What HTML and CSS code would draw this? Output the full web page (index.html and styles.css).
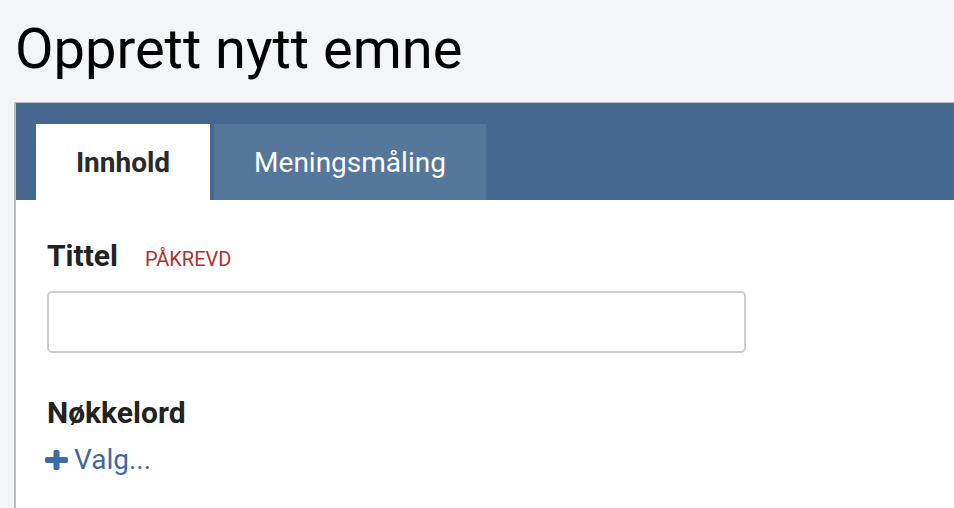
FILE: index.html
```html
<!DOCTYPE html>
<html lang="no">
<head>
<meta charset="utf-8">
<link rel="stylesheet" href="styles.css">
</head>
<body>
<h1 class="page-title">Opprett nytt emne</h1>
<div class="panel">
  <div class="tabs">
    <div class="tab tab-active">Innhold</div>
    <div class="tab">Meningsmåling</div>
  </div>
  <div class="panel-body">
    <div class="field">
      <div class="label-row">
        <span class="label">Tittel</span>
        <span class="required">PÅKREVD</span>
      </div>
      <input class="text-input" type="text">
    </div>
    <div class="field">
      <div class="label-row">
        <span class="label">Nøkkelord</span>
      </div>
      <a class="add-link" href="#">
        <svg class="plus" width="23" height="20" viewBox="0 0 23 20" aria-hidden="true">
          <path d="M8.5 1.8A1.8 1.8 0 0 1 10.3 0h2.4a1.8 1.8 0 0 1 1.8 1.8V7h6.7a1.8 1.8 0 0 1 1.8 1.8v2.4a1.8 1.8 0 0 1-1.8 1.8H14.5v5.2a1.8 1.8 0 0 1-1.8 1.8h-2.4a1.8 1.8 0 0 1-1.8-1.8V13H1.8A1.8 1.8 0 0 1 0 11.2V8.8A1.8 1.8 0 0 1 1.8 7h6.7z" fill="#3b6aa5"/>
        </svg>
        <span>Valg...</span>
      </a>
    </div>
  </div>
</div>
</body>
</html>
```
FILE: styles.css
```css
html, body {
  margin: 0;
  padding: 0;
}
body {
  background: #f4f5f7;
  font-family: Roboto, "Liberation Sans", sans-serif;
  color: #000;
  overflow: hidden;
  height: 508px;
}
.page-title {
  margin: 0;
  padding: 19px 0 0 15px;
  box-sizing: border-box;
  font-size: 56px;
  font-weight: 400;
  line-height: 60px;
  height: 102px;
}
.panel {
  margin-left: 14px;
  width: 940px;
  border-top: 1px solid #bcbcbc;
  border-left: 2px solid #bcbcbc;
  background: #fff;
  height: 420px;
}
.tabs {
  background: #46678f;
  display: flex;
  gap: 4px;
  padding: 21px 0 0 20px;
  height: 76px;
}
.tab {
  background: #56779c;
  color: #fff;
  font-size: 28px;
  font-weight: 400;
  display: flex;
  align-items: center;
  justify-content: center;
  height: 76px;
  width: 272px;
  box-sizing: border-box;
}
.tab-active {
  background: #fff;
  color: #2a2a2a;
  font-weight: 700;
  width: 174px;
}
.panel-body {
  padding: 38px 0 0 31px;
}
.label-row {
  display: flex;
  align-items: baseline;
  gap: 27px;
  height: 36px;
  line-height: 36px;
}
.label {
  font-size: 30px;
  font-weight: 700;
  color: #222;
}
.required {
  font-size: 20px;
  color: #b3302c;
}
.text-input {
  display: block;
  margin: 17px 0 42px;
  width: 699px;
  height: 62px;
  box-sizing: border-box;
  border: 2px solid #cdcdcd;
  border-radius: 5px;
  background: #fff;
  outline: none;
}
.add-link {
  display: inline-flex;
  align-items: center;
  gap: 6px;
  margin-top: 12px;
  margin-left: -2px;
  color: #3d69a2;
  text-decoration: none;
  font-size: 28px;
  line-height: 34px;
}
.plus {
  display: block;
}
```
